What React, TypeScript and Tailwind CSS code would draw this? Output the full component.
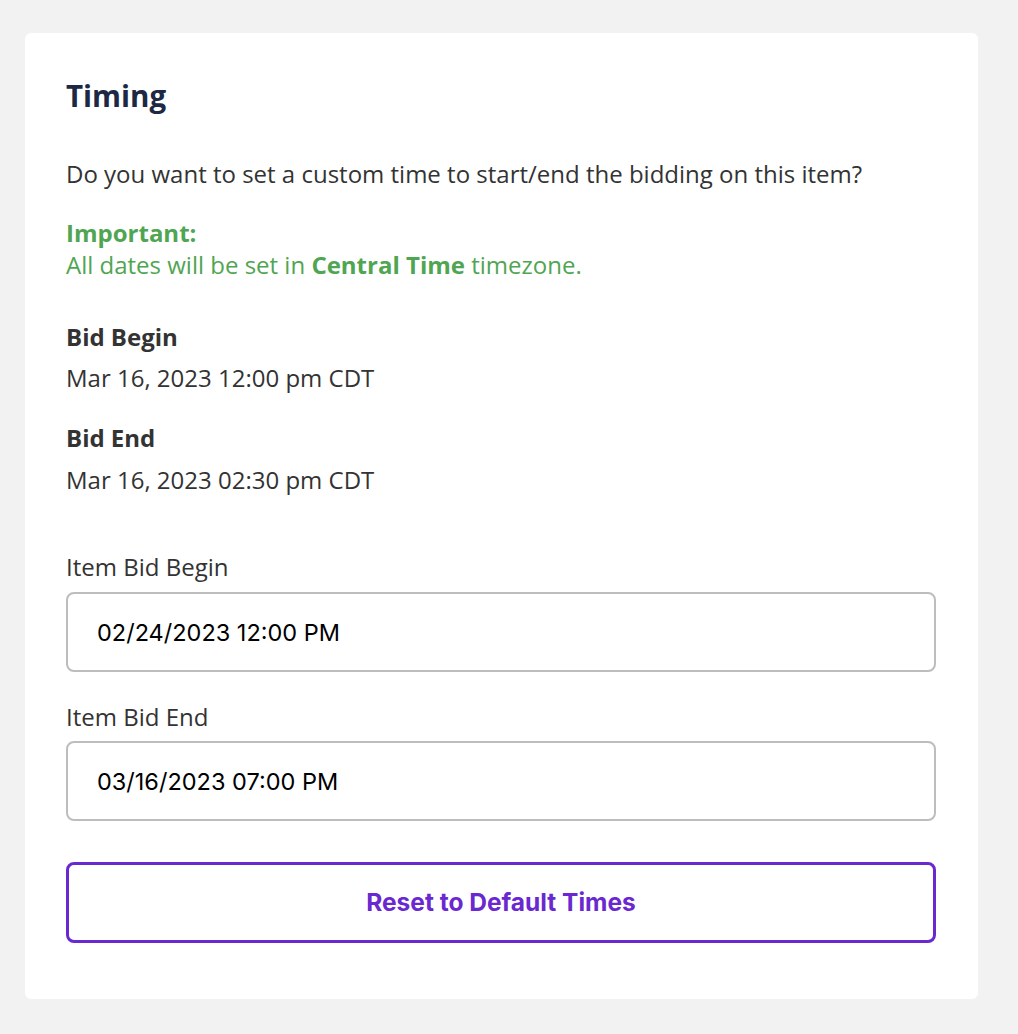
import React from 'react';

const body = { fontFamily: '"Open Sans", "Liberation Sans", sans-serif' };
const ui = { fontFamily: 'Inter, "Liberation Sans", sans-serif' };

export default function App() {
  return (
    <div className="min-h-[1034px] bg-[#f2f2f2] pt-[33px] pl-[25px] pr-[40px] pb-[36px]" style={body}>
      <div className="w-[953px] rounded-[6px] bg-white pt-[45px] pb-[56px] pl-[41px] pr-[42px] text-[#333333]">
        <h2 className="text-[29.5px] leading-[36px] font-bold text-[#1d2844]">Timing</h2>

        <p className="mt-[44px] text-[24px] leading-[32px]">
          Do you want to set a custom time to start/end the bidding on this item?
        </p>

        <div className="mt-[27px] text-[24px] leading-[32px] text-[#50a552]">
          <div className="font-bold">Important:</div>
          <div>
            All dates will be set in <span className="font-bold">Central Time</span> timezone.
          </div>
        </div>

        <div className="mt-[40px] text-[24px] leading-[32px]">
          <div className="font-bold">Bid Begin</div>
          <div className="mt-[9px]">Mar 16, 2023 12:00 pm CDT</div>
        </div>

        <div className="mt-[28px] text-[24px] leading-[32px]">
          <div className="font-bold">Bid End</div>
          <div className="mt-[10px]">Mar 16, 2023 02:30 pm CDT</div>
        </div>

        <label className="mt-[55px] block text-[24px] leading-[32px]">Item Bid Begin</label>
        <input
          readOnly
          value="02/24/2023 12:00 PM"
          className="mt-[9px] block h-[80px] w-full rounded-[8px] border-2 border-[#bdbdbd] bg-white pl-[29px] text-[23.5px] text-black outline-none"
          style={ui}
        />

        <label className="mt-[29px] block text-[24px] leading-[32px]">Item Bid End</label>
        <input
          readOnly
          value="03/16/2023 07:00 PM"
          className="mt-[8px] block h-[80px] w-full rounded-[8px] border-2 border-[#bdbdbd] bg-white pl-[29px] text-[23.5px] text-black outline-none"
          style={ui}
        />

        <button
          type="button"
          className="mt-[41px] flex h-[81px] w-full items-center justify-center rounded-[8px] border-[3px] border-[#6a28d0] bg-white text-[24.5px] font-bold text-[#6a28d0]"
          style={ui}
        >
          Reset to Default Times
        </button>
      </div>
    </div>
  );
}
